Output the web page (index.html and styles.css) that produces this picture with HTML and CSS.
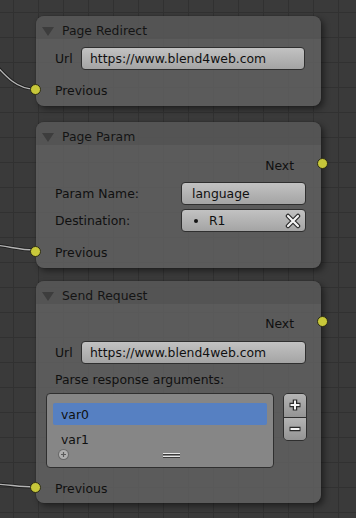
FILE: index.html
```html
<!DOCTYPE html>
<html lang="en">
<head>
  <meta charset="UTF-8">
  <title>Node Editor</title>
  <link rel="stylesheet" href="styles.css">
</head>
<body>
  <div class="editor">
    <svg class="wires" width="356" height="518">
      <path class="wire-edge" d="M -12 56 C 8 80, 18 89, 35 89"/>
      <path class="wire" d="M -12 56 C 8 80, 18 89, 35 89"/>
      <path class="wire-edge" d="M -5 245 C 12 247, 20 250, 35 250"/>
      <path class="wire" d="M -5 245 C 12 247, 20 250, 35 250"/>
      <path class="wire-edge" d="M -5 484 C 12 485, 20 487, 35 487"/>
      <path class="wire" d="M -5 484 C 12 485, 20 487, 35 487"/>
    </svg>

    <div class="node node-redirect">
      <div class="node-header"><span class="collapse"></span>Page Redirect</div>
      <div class="node-body">
        <div class="row prop mt8">
          <span class="label label-short">Url</span>
          <div class="field">https://www.blend4web.com</div>
        </div>
        <div class="row socket-row mt9"><span class="socket in"></span>Previous</div>
      </div>
    </div>

    <div class="node node-param">
      <div class="node-header"><span class="collapse"></span>Page Param</div>
      <div class="node-body">
        <div class="row socket-row out mt9">Next<span class="socket"></span></div>
        <div class="row prop mt6">
          <span class="label label-wide">Param Name:</span>
          <div class="field field-pad">language</div>
        </div>
        <div class="row prop mt4">
          <span class="label label-wide">Destination:</span>
          <div class="field field-search">
            <span class="dot"></span>R1
            <svg class="clear" width="16" height="16" viewBox="0 0 16 16">
              <path d="M3 3 L13 13 M13 3 L3 13" stroke="#2a2a2a" stroke-width="4.5" stroke-linecap="round"/>
              <path d="M3 3 L13 13 M13 3 L3 13" stroke="#f4f4f4" stroke-width="2.2" stroke-linecap="round"/>
            </svg>
          </div>
        </div>
        <div class="row socket-row mt9"><span class="socket in"></span>Previous</div>
      </div>
    </div>

    <div class="node node-request">
      <div class="node-header"><span class="collapse"></span>Send Request</div>
      <div class="node-body">
        <div class="row socket-row out mt8">Next<span class="socket"></span></div>
        <div class="row prop mt7">
          <span class="label label-short">Url</span>
          <div class="field">https://www.blend4web.com</div>
        </div>
        <div class="row text-row mt5">Parse response arguments:</div>
        <div class="list-row mt4">
          <div class="list">
            <div class="list-item selected">var0</div>
            <div class="list-item">var1</div>
            <div class="list-foot">
              <span class="add-circle">
                <svg width="9" height="9" viewBox="0 0 9 9"><path d="M4.5 2 V7 M2 4.5 H7" stroke="#5a5a5a" stroke-width="1.2"/></svg>
              </span>
              <span class="grip"></span>
            </div>
          </div>
          <div class="list-buttons">
            <div class="list-btn">
              <svg width="16" height="16" viewBox="0 0 16 16">
                <path d="M8 2.5 V13.5 M2.5 8 H13.5" stroke="#2a2a2a" stroke-width="4.5"/>
                <path d="M8 3.5 V12.5 M3.5 8 H12.5" stroke="#f4f4f4" stroke-width="2"/>
              </svg>
            </div>
            <div class="list-btn">
              <svg width="16" height="16" viewBox="0 0 16 16">
                <path d="M2.5 8 H13.5" stroke="#2a2a2a" stroke-width="4.5"/>
                <path d="M3.5 8 H12.5" stroke="#f4f4f4" stroke-width="2"/>
              </svg>
            </div>
          </div>
        </div>
        <div class="row socket-row mt9"><span class="socket in"></span>Previous</div>
      </div>
    </div>
  </div>
</body>
</html>
```

FILE: styles.css
```css
* { box-sizing: border-box; }
body {
  margin: 0;
  background: #3a3a3a;
  font-family: "DejaVu Sans", "Liberation Sans", sans-serif;
  font-size: 12.4px;
  color: #101010;
}
.editor {
  position: relative;
  width: 356px;
  height: 518px;
  overflow: hidden;
  background-color: #3a3a3a;
  background-image:
    linear-gradient(to right, #313131 1px, transparent 1px),
    linear-gradient(to bottom, #313131 1px, transparent 1px);
  background-size: 25px 25px;
  background-position: 13px 12px;
}
.wires {
  position: absolute;
  top: 0;
  left: 0;
}
.wire-edge { fill: none; stroke: #1e1e1e; stroke-width: 3.2; }
.wire { fill: none; stroke: #b4b4b4; stroke-width: 1.4; }

.node {
  position: absolute;
  left: 36px;
  width: 285px;
  border-radius: 8px;
  background: rgba(99, 99, 99, 0.82);
  box-shadow: 3px 3px 6px rgba(0, 0, 0, 0.45), 0 0 1px rgba(0, 0, 0, 0.6);
}
.node-redirect { top: 16px; height: 90px; }
.node-param { top: 122px; height: 146px; }
.node-request { top: 281px; height: 222px; }

.node-header {
  display: flex;
  align-items: center;
  height: 23px;
  padding: 6px 0 0 26px;
  position: relative;
  border-radius: 8px 8px 0 0;
  background: rgba(78, 78, 78, 0.55);
  color: #141414;
}
.collapse {
  position: absolute;
  left: 6px;
  top: 11px;
  width: 0;
  height: 0;
  border-left: 6px solid transparent;
  border-right: 6px solid transparent;
  border-top: 9px solid #3d3d3d;
}

.node-body {
  display: flex;
  flex-direction: column;
}
.mt4 { margin-top: 4px; }
.mt5 { margin-top: 5px; }
.mt6 { margin-top: 6px; }
.mt7 { margin-top: 7px; }
.mt8 { margin-top: 8px; }
.mt9 { margin-top: 9px; }

.row {
  position: relative;
  display: flex;
  align-items: center;
  padding: 0 15px 0 19px;
}
.socket-row { height: 22px; }
.socket-row.out { justify-content: flex-end; padding-right: 27px; }
.text-row { height: 20px; }
.socket {
  position: absolute;
  top: 5px;
  left: -6px;
  width: 11px;
  height: 11px;
  border-radius: 50%;
  background: #c8c83a;
  border: 1px solid #2c2c14;
}
.out .socket { left: auto; right: -7px; top: 4px; }

.prop { height: 23px; }
.node-redirect .prop { padding-right: 16px; }
.label { flex: none; }
.label-short { width: 26px; }
.label-wide { width: 126px; }
.field {
  flex: 1;
  height: 23px;
  display: flex;
  align-items: center;
  padding-left: 8px;
  border: 1px solid #2f2f2f;
  border-radius: 4px;
  background: linear-gradient(#c2c2c2, #a4a4a4);
}
.field-pad { padding-left: 10px; }
.field-search { padding-left: 12px; position: relative; }
.dot {
  width: 4px;
  height: 4px;
  border-radius: 50%;
  background: #151515;
  margin-right: 11px;
}
.clear {
  position: absolute;
  right: 4px;
  top: 3px;
}

.list-row {
  display: flex;
  gap: 9px;
  padding: 0 14px 0 10px;
}
.list {
  flex: 1;
  height: 75px;
  border: 1px solid #2f2f2f;
  border-radius: 4px;
  background: #868686;
  padding: 9px 6px 0 6px;
}
.list-item {
  height: 22px;
  display: flex;
  align-items: center;
  padding-left: 8px;
  margin-bottom: 3px;
}
.list-item.selected {
  background: #5680c2;
  border-radius: 2px;
}
.list-foot {
  position: relative;
  height: 14px;
  margin-top: -4px;
}
.add-circle {
  position: absolute;
  left: 6px;
  top: 1px;
  width: 9px;
  height: 9px;
  border-radius: 50%;
  background: #b0b0b0;
  box-shadow: 0 0 0 1px #6a6a6a;
  display: flex;
}
.grip {
  position: absolute;
  left: 110px;
  top: 4px;
  width: 17px;
  height: 1px;
  background: #e6e6e6;
  box-shadow: 0 1px 0 #3a3a3a, 0 3px 0 #e6e6e6, 0 4px 0 #3a3a3a;
}
.list-buttons {
  width: 24px;
  height: 48px;
  border: 1px solid #2f2f2f;
  border-radius: 5px;
  overflow: hidden;
  display: flex;
  flex-direction: column;
}
.list-btn {
  flex: 1;
  display: flex;
  align-items: center;
  justify-content: center;
  background: linear-gradient(#b4b4b4, #949494);
}
.list-btn + .list-btn { border-top: 1px solid #2f2f2f; }
```
